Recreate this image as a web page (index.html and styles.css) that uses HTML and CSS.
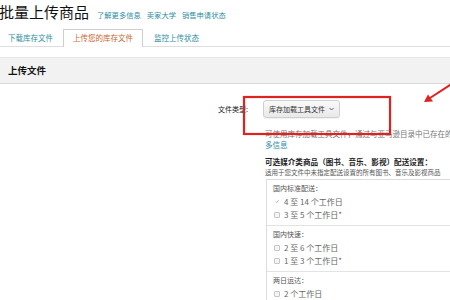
FILE: index.html
```html
<!DOCTYPE html>
<html lang="zh-CN">
<head>
<meta charset="utf-8">
<title>批量上传商品</title>
<link rel="stylesheet" href="styles.css">
</head>
<body>
<header class="page-head">
  <h1 class="title">批量上传商品</h1>
  <nav class="head-links"><a href="#">了解更多信息</a><a href="#">卖家大学</a><a href="#">销售申请状态</a></nav>
</header>
<div class="tabs">
  <a class="tab" href="#">下载库存文件</a>
  <a class="tab active" href="#">上传您的库存文件</a>
  <a class="tab last" href="#">监控上传状态</a>
</div>
<div class="section-bar">上传文件</div>
<div class="form-row">
  <div class="label">文件类型:</div>
  <div class="field">
    <button class="select" type="button">库存加载工具文件<svg class="chev" width="5" height="4" viewBox="0 0 5 4"><path d="M0.5 1 L2.5 3 L4.5 1" fill="none" stroke="#555" stroke-width="0.9"/></svg></button>
    <p class="help">可使用库存加载工具文件，通过与亚马逊目录中已存在的商品进行匹配来添加商品。<a href="#">了解更<br>多信息</a></p>
    <p class="media-title">可选媒介类商品（图书、音乐、影视）配送设置：</p>
    <p class="media-sub">适用于您文件中未指定配送设置的所有图书、音乐及影视商品</p>
    <div class="ship-box">
      <div class="group">
        <div class="group-title">国内标准配送：</div>
        <div class="option"><span class="cb checked"><svg width="5" height="5" viewBox="0 0 5 5"><path d="M0.6 2.6 L2 4 L4.5 0.8" fill="none" stroke="#9a9a9a" stroke-width="0.9"/></svg></span>4 至 14 个工作日</div>
        <div class="option"><span class="cb"></span>3 至 5 个工作日*</div>
      </div>
      <div class="group">
        <div class="group-title">国内快速：</div>
        <div class="option"><span class="cb"></span>2 至 6 个工作日</div>
        <div class="option"><span class="cb"></span>1 至 3 个工作日*</div>
      </div>
      <div class="group">
        <div class="group-title">两日运达：</div>
        <div class="option"><span class="cb"></span>2 个工作日</div>
      </div>
    </div>
  </div>
</div>
<svg class="annot" width="450" height="300" viewBox="0 0 450 300">
  <rect x="244" y="97" width="146" height="37" fill="none" stroke="#e0221f" stroke-width="2.2"/>
  <line x1="453" y1="83" x2="430" y2="98" stroke="#e0221f" stroke-width="2"/>
  <polygon points="424,102 428,94.5 433,101.5" fill="#e0221f"/>
</svg>
</body>
</html>
```
FILE: styles.css
```css
html, body {
  margin: 0;
  padding: 0;
  overflow: hidden;
  background: #fff;
}
body {
  position: relative;
  width: 450px;
  height: 300px;
  font-family: "Noto Sans CJK SC", "Noto Sans", sans-serif;
  color: #333;
}
a {
  color: #2f8ea3;
  text-decoration: none;
}
p { margin: 0; }

.page-head {
  display: flex;
  align-items: baseline;
  gap: 8px;
  height: 29px;
}
.title {
  margin: 0 0 0 -1px;
  font-size: 15px;
  font-weight: 400;
  line-height: 24px;
  color: #111;
}
.head-links {
  display: flex;
  gap: 6px;
  font-size: 7.3px;
}

.tabs {
  display: flex;
  height: 17px;
  border-bottom: 1px solid #dedede;
  font-size: 7.5px;
}
.tab {
  padding: 0 10px;
  line-height: 17px;
}
.tab:first-child { padding-left: 8px; }
.tab.last { padding-left: 11px; }
.tab.active {
  color: #c8642c;
  background: #fff;
  border: 1px solid #cfcfcf;
  border-bottom: none;
  padding: 0 9px;
  height: 17px;
  line-height: 16px;
}

.section-bar {
  margin-top: 10px;
  height: 25px;
  line-height: 25px;
  padding-left: 8px;
  background: #f2f2f2;
  border-top: 1px solid #e8e8e8;
  border-bottom: 1px solid #dadada;
  font-size: 9.5px;
  font-weight: 700;
  color: #111;
}

.form-row {
  display: grid;
  grid-template-columns: 248px 250px;
  column-gap: 15px;
  padding-top: 16px;
}
.label {
  text-align: right;
  font-size: 7px;
  line-height: 18px;
  color: #222;
}
.select {
  display: flex;
  width: max-content;
  align-items: center;
  gap: 4px;
  height: 18px;
  margin: 0;
  padding: 0 5px;
  border: 1px solid #cfcfcf;
  border-radius: 3px;
  background: linear-gradient(#f9f9f9, #e9e9e9);
  box-shadow: 0 1px 1px rgba(0,0,0,0.06);
  font-family: inherit;
  font-size: 7px;
  color: #333;
}
.chev { display: block; }

.help {
  margin-top: 10px;
  padding-left: 2px;
  font-size: 7.5px;
  line-height: 11px;
  color: #777;
  white-space: nowrap;
}
.media-title {
  margin-top: 6px;
  padding-left: 2px;
  font-size: 7.6px;
  font-weight: 700;
  line-height: 11px;
  color: #222;
  white-space: nowrap;
}
.media-sub {
  padding-left: 2px;
  font-size: 6.5px;
  line-height: 10px;
  color: #555;
  white-space: nowrap;
}

.ship-box {
  margin: 2px 0 0 3px;
  border: 1px solid #dcdcdc;
}
.group {
  padding: 2px 6px 4px;
}
.group + .group {
  border-top: 1px solid #e3e3e3;
}
.group-title {
  font-size: 7px;
  line-height: 13px;
  color: #555;
}
.option {
  display: flex;
  align-items: center;
  gap: 4px;
  padding-left: 1px;
  font-size: 8px;
  line-height: 13px;
  color: #666;
}
.cb {
  width: 4px;
  height: 4px;
  border: 1px solid #c6c6c6;
  border-radius: 1px;
  background: #f5f5f5;
  display: flex;
  align-items: center;
  justify-content: center;
}
.cb.checked {
  border-color: transparent;
  background: transparent;
}

.annot {
  position: absolute;
  left: 0;
  top: 0;
  pointer-events: none;
}
```
